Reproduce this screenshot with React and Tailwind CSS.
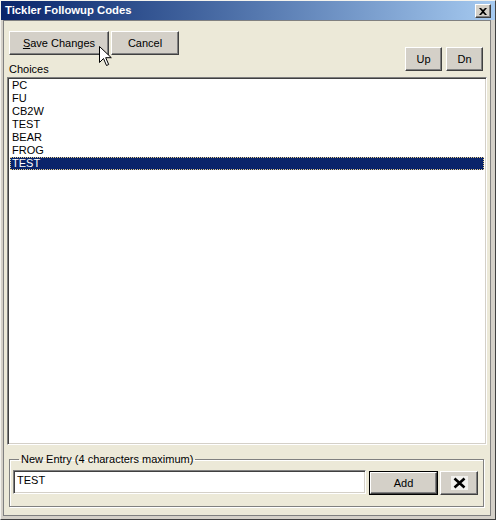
import React from 'react';

const items = ['PC', 'FU', 'CB2W', 'TEST', 'BEAR', 'FROG', 'TEST'];

const btn = 'flex items-center justify-center bg-[#d4d0c8] border border-t-white border-l-white border-r-[#404040] border-b-[#404040] shadow-[inset_-1px_-1px_0_#808080] text-black';

const App = () => {
    return (
        <div className="relative w-[496px] h-[520px] flex flex-col bg-[#d4d0c8] border border-t-[#f4f3ee] border-l-[#f4f3ee] border-r-[#404040] border-b-[#404040] font-['Liberation_Sans',Arial,sans-serif] text-[11px] leading-[13px] text-black select-none">
            {/* Title bar */}
            <div className="h-[19px] flex items-center justify-between bg-gradient-to-r from-[#0a246a] to-[#a6caf0] pl-[4px] pr-[4px]">
                <span className="font-bold text-white leading-[19px] text-[11.3px]">Tickler Followup Codes</span>
                <div className={`${btn} w-[16px] h-[14px] mt-[1px]`}>
                    <svg width="8" height="7" viewBox="0 0 8 7">
                        <path d="M0 0h2l2 2 2-2h2L5 3.5 8 7H6L4 5 2 7H0l3-3.5z" fill="#000" />
                    </svg>
                </div>
            </div>

            {/* Client area */}
            <div className="flex-1 ml-[2px] mr-[4px] mb-[3px] border border-[#808080] bg-[#ece9d8] flex flex-col px-[3px]">
                {/* Header */}
                <div className="flex items-end justify-between pt-[10px]">
                    <div className="flex flex-col ml-[2px]">
                        <div className="flex gap-[2px]">
                            <div className={`${btn} w-[100px] h-[24px]`}>
                                <span><span className="underline">S</span>ave Changes</span>
                            </div>
                            <div className={`${btn} w-[68px] h-[24px]`}>Cancel</div>
                        </div>
                        <div className="mt-[7px] h-[14px] leading-[14px]">Choices</div>
                    </div>
                    <div className="flex gap-[4px] mb-[5px] mr-[4px]">
                        <div className={`${btn} w-[37px] h-[24px]`}>Up</div>
                        <div className={`${btn} w-[37px] h-[24px]`}>Dn</div>
                    </div>
                </div>

                {/* Listbox */}
                <div className="mt-[1px] h-[368px] bg-white border border-t-[#808080] border-l-[#808080] border-r-white border-b-white shadow-[inset_1px_1px_0_#404040,inset_-1px_-1px_0_#d4d0c8] pt-[1px] px-[2px]">
                    {items.map((item, idx) => (
                        idx === items.length - 1 ? (
                            <div key={idx} className="h-[13px] bg-[#0a246a] text-white border border-dotted border-[#e8cf8a] pl-[1px] leading-[11px]">
                                {item}
                            </div>
                        ) : (
                            <div key={idx} className="h-[13px] pl-[2px]">{item}</div>
                        )
                    ))}
                </div>

                {/* New Entry group */}
                <fieldset className="mt-[8px] ml-[2px] mr-[3px] border border-[#808080] shadow-[inset_1px_1px_0_#fff,1px_1px_0_#fff] px-[3px] pt-[4px] pb-[11px]">
                    <legend className="ml-[6px] px-[2px] leading-[13px]">New Entry (4 characters maximum)</legend>
                    <div className="flex items-start">
                        <div className="w-[353px] h-[24px] bg-white border border-t-[#808080] border-l-[#808080] border-r-white border-b-white shadow-[inset_1px_1px_0_#404040,inset_-1px_-1px_0_#d4d0c8] pl-[3px] pt-[3px]">
                            TEST
                        </div>
                        <div className="ml-[3px] mt-[1px] w-[69px] h-[24px] border border-black">
                            <div className={`${btn} w-full h-full`}>Add</div>
                        </div>
                        <div className={`${btn} ml-[2px] mt-[1px] w-[38px] h-[24px]`}>
                            <svg width="17" height="14" viewBox="0 0 17 14">
                                <rect width="17" height="14" fill="#f2f1ee" />
                                <path d="M3.5 2.5l10 9M13.5 2.5l-10 9" stroke="#000" strokeWidth="2.6" />
                            </svg>
                        </div>
                    </div>
                </fieldset>
            </div>

            {/* Mouse cursor */}
            <svg className="absolute left-[98px] top-[45px]" width="13" height="21" viewBox="0 0 13 21">
                <path d="M0.5 0.5v16l4-4 3 7 2.2-1-3-6.8h5.6z" fill="#fff" stroke="#000" strokeWidth="1" />
            </svg>
        </div>
    );
};

export default App;
